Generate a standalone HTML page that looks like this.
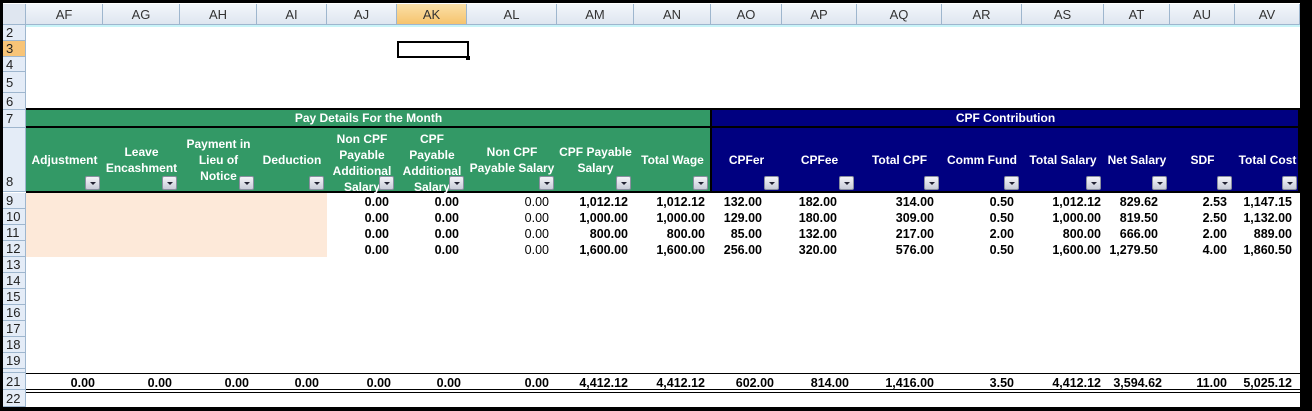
<!DOCTYPE html>
<html><head><meta charset="utf-8"><style>
*{margin:0;padding:0;box-sizing:border-box}
body{width:1312px;height:411px;background:#000;position:relative;overflow:hidden;font-family:"Liberation Sans",Arial,sans-serif}
#sheet{position:absolute;left:3px;top:3px;width:1297px;height:404px;background:#fff;overflow:hidden}
.a{position:absolute}
.ch{position:absolute;top:1px;height:21px;background:linear-gradient(#f3f6fb,#dfe6f0);border-right:1px solid #9eb6ce;border-bottom:1px solid #9eb6ce;font-size:13px;color:#333;text-align:center;line-height:21px}
.rh{position:absolute;left:0;width:23px;background:#e4ecf7;border-bottom:1px solid #9eb6ce;border-right:1px solid #9eb6ce;font-size:13px;color:#222;text-align:left;padding-left:3px;overflow:hidden}
.hd{position:absolute;top:125px;height:64px;display:flex;align-items:center;justify-content:center;text-align:center;color:#fff;font-weight:bold;font-size:12px;line-height:16px}
.dd{position:absolute;width:15px;height:14px;background:linear-gradient(#f4f4f8,#c8ccd8);border:1px solid #8a8fa0;border-radius:2px}
.dd:after{content:"";position:absolute;left:4px;top:5px;border-left:3px solid transparent;border-right:3px solid transparent;border-top:3px solid #223}
.v{position:absolute;font-size:12.5px;font-weight:bold;text-align:right;color:#000;line-height:16px}
</style></head><body>
<div id="sheet"></div>
<div class="a" style="left:1300px;top:25px;width:12px;height:386px;background:#000"></div>
<script>
var S=document.getElementById('sheet');
function add(h){S.insertAdjacentHTML('beforeend',h)}
var cols=[['AF',26,103],['AG',103,180],['AH',180,257],['AI',257,327],['AJ',327,397],['AK',397,467],['AL',467,557],['AM',557,634],['AN',634,711],['AO',711,782],['AP',782,857],['AQ',857,942],['AR',942,1022],['AS',1022,1104],['AT',1104,1170],['AU',1170,1235],['AV',1235,1300]];
var o=3;
add('<div class="ch" style="left:0;width:23px;background:#dfe6f0"></div>');
cols.forEach(function(c){var st=c[0]=='AK'?'background:linear-gradient(#fbe0a8,#f6c46e);':'';add('<div class="ch" style="'+st+'left:'+(c[1]-o)+'px;width:'+(c[2]-c[1])+'px">'+c[0]+'</div>')});
add('<div class="ch" style="left:1297px;width:10px"></div>');
add('<div class="a" style="left:23px;top:22px;width:1274px;height:2px;background:#c8f4f8"></div>');
var rows=[[2,22,38],[3,38,54],[4,54,69],[5,69,90],[6,90,107],[7,107,125],[8,125,189]];
for(var r=9;r<=19;r++)rows.push([r,190+(r-9)*16,206+(r-9)*16]);
rows.push(['',366,370]);rows.push([21,370,387]);rows.push([22,387,404]);
rows.forEach(function(r){var st=r[0]==3?'background:#f8c477;':'';var ex=r[0]==8?'padding-top:46px;':'';add('<div class="rh" style="'+st+ex+'top:'+r[1]+'px;height:'+(r[2]-r[1])+'px;line-height:'+(r[0]==8?16:(r[2]-r[1]))+'px">'+r[0]+'</div>')});
add('<div class="a" style="left:'+(397-o)+'px;top:38px;width:72px;height:17px;border:2px solid #000"></div>');
add('<div class="a" style="left:'+(466-o)+'px;top:53px;width:4px;height:4px;background:#000"></div>');
add('<div class="a" style="left:23px;top:105px;width:1274px;height:2px;background:#000"></div>');
add('<div class="a" style="left:23px;top:107px;width:685px;height:82px;background:#339966"></div>');
add('<div class="a" style="left:708px;top:107px;width:589px;height:82px;background:#000080"></div>');
add('<div class="a" style="left:23px;top:123px;width:1274px;height:2px;background:#000"></div>');
add('<div class="a" style="left:23px;top:188px;width:1274px;height:2px;background:#000"></div>');
add('<div class="a" style="left:707px;top:107px;width:2px;height:82px;background:#000"></div>');
add('<div class="a" style="left:1295px;top:107px;width:2px;height:82px;background:#000"></div>');
add('<div class="hd" style="left:23px;top:107px;height:16px;width:685px">Pay Details For the Month</div>');
add('<div class="hd" style="left:708px;top:107px;height:16px;width:589px">CPF Contribution</div>');
var H=['Adjustment','Leave<br>Encashment','Payment in<br>Lieu of<br>Notice','Deduction','Non CPF<br>Payable<br>Additional<br>Salary','CPF<br>Payable<br>Additional<br>Salary','Non CPF<br>Payable Salary','CPF Payable<br>Salary','Total Wage','CPFer','CPFee','Total CPF','Comm Fund','Total Salary','Net Salary','SDF','Total Cost'];
cols.forEach(function(c,i){var pad=(i==4||i==5)?'padding-top:6px;':'';add('<div class="hd" style="'+pad+'left:'+(c[1]-o)+'px;width:'+(c[2]-c[1])+'px">'+H[i]+'</div>');add('<div class="dd" style="left:'+(c[2]-o-18)+'px;top:173px"></div>')});
add('<div class="a" style="left:23px;top:190px;width:'+(327-26)+'px;height:64px;background:#fde9d9"></div>');
add('<div class="a" style="left:1297px;top:189px;width:3px;height:1px;background:#888"></div>');
var D=[
['0.00','0.00','0.00','1,012.12','1,012.12','132.00','182.00','314.00','0.50','1,012.12','829.62','2.53','1,147.15'],
['0.00','0.00','0.00','1,000.00','1,000.00','129.00','180.00','309.00','0.50','1,000.00','819.50','2.50','1,132.00'],
['0.00','0.00','0.00','800.00','800.00','85.00','132.00','217.00','2.00','800.00','666.00','2.00','889.00'],
['0.00','0.00','0.00','1,600.00','1,600.00','256.00','320.00','576.00','0.50','1,600.00','1,279.50','4.00','1,860.50']];
var rp=[8,8,8,6,6,20,20,8,8,3,12,8,8];
D.forEach(function(row,ri){row.forEach(function(v,j){var c=cols[j+4];var nb=(j==2)?'font-weight:normal;':'';add('<div class="v" style="'+nb+'left:'+(c[1]-o)+'px;width:'+(c[2]-c[1]-rp[j])+'px;top:'+(191+ri*16)+'px">'+v+'</div>')})});
var T=['0.00','0.00','0.00','0.00','0.00','0.00','0.00','4,412.12','4,412.12','602.00','814.00','1,416.00','3.50','4,412.12','3,594.62','11.00','5,025.12'];
var tp=[8,8,8,8,6,6,8,6,6,8,8,8,8,3,8,8,8];
T.forEach(function(v,j){var c=cols[j];add('<div class="v" style="left:'+(c[1]-o)+'px;width:'+(c[2]-c[1]-tp[j])+'px;top:372px">'+v+'</div>')});
add('<div class="a" style="left:23px;top:370px;width:1274px;height:1px;background:#000"></div>');
add('<div class="a" style="left:23px;top:386px;width:1274px;height:1px;background:#000"></div>');
add('<div class="a" style="left:23px;top:389px;width:1274px;height:1px;background:#000"></div>');
</script>
</body></html>
